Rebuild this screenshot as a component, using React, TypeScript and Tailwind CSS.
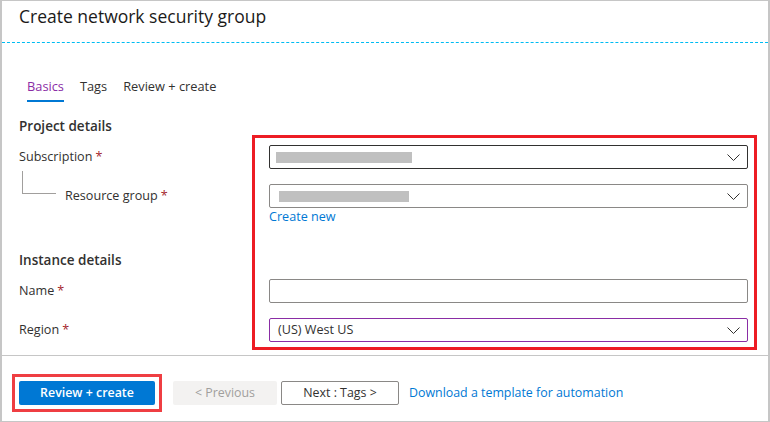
import React from 'react';

const FONT = { fontFamily: '"Open Sans", "Noto Sans", Arial, sans-serif' };

const Chevron = () => (
  <svg width="13" height="7" viewBox="0 0 13 7" className="shrink-0">
    <polyline points="0.5,0.5 6.5,6.5 12.5,0.5" fill="none" stroke="#323130" strokeWidth="1" />
  </svg>
);

const Req = () => <span className="text-[#a4262c] ml-[3px]">*</span>;

export default function App() {
  return (
    <div style={FONT} className="w-[770px] h-[422px] bg-white border-x-2 border-y border-[#c6c6c6] flex flex-col text-[#323130] overflow-hidden">
      {/* header */}
      <div className="h-[42px] border-b border-dashed border-[#00bcf2] px-[17px] pt-[3px]">
        <h1 className="text-[17.5px] leading-[24px] font-normal text-[#1b1a19]">Create network security group</h1>
      </div>

      <div className="pl-[17px]">
        {/* tabs */}
        <div className="mt-[34px] ml-[8px] flex gap-[16px] text-[12.8px] leading-[18px]">
          <div className="flex flex-col">
            <span className="text-[#8a2da5]">Basics</span>
            <span className="mt-[5px] h-[2px] bg-[#0078d4]" />
          </div>
          <span>Tags</span>
          <span>Review + create</span>
        </div>

        <div className="mt-[15px] text-[13.5px] leading-[18px] font-semibold">Project details</div>

        <div className="flex">
          {/* labels */}
          <div className="w-[233px] shrink-0 text-[12.6px] leading-[18px] flex flex-col">
            <div className="mt-[10px] h-[24px] flex items-center">Subscription<Req /></div>
            <div className="mt-[2px] flex items-start">
              <div className="ml-[3px] w-[34px] h-[23px] border-l border-b border-[#a19f9d]" />
              <div className="ml-[9px] mt-[16px] h-[18px]">Resource group<Req /></div>
            </div>
            <div className="mt-[46px] text-[13.5px] font-semibold">Instance details</div>
            <div className="mt-[13px]">Name<Req /></div>
            <div className="mt-[21px]">Region<Req /></div>
          </div>

          {/* fields */}
          <div className="w-[505px] shrink-0 border-[3px] border-[#ed1c24] pl-[14px] pr-[6px] pt-[7px] pb-[5px] flex flex-col">
            <div className="h-[24px] border border-[#323130] rounded-[2px] flex items-center pl-[6px] pr-[7px]">
              <div className="w-[136px] h-[11px] bg-[#c0c0c0]" />
              <div className="flex-1" />
              <Chevron />
            </div>
            <div className="mt-[15px] h-[24px] border border-[#8a8886] rounded-[2px] flex items-center pl-[9px] pr-[7px]">
              <div className="w-[130px] h-[11px] bg-[#c0c0c0]" />
              <div className="flex-1" />
              <Chevron />
            </div>
            <a className="text-[12.6px] leading-[18px] text-[#0078d4] self-start">Create new</a>
            <div className="mt-[53px] h-[24px] border border-[#8a8886] rounded-[2px]" />
            <div className="mt-[15px] h-[24px] border border-[#8a2da5] rounded-[2px] flex items-center pl-[8px] pr-[7px] text-[12.6px]">
              <span className="flex-1">(US) West US</span>
              <Chevron />
            </div>
          </div>
        </div>
      </div>

      <div className="mt-[5px] h-px bg-[#c6c6c6]" />

      {/* footer */}
      <div className="mt-[18px] px-[10px] flex items-center text-[12.4px]">
        <div className="border-[3px] border-[#ef3e42] p-[4px]">
          <button className="w-[136px] h-[24px] bg-[#0078d4] text-white font-semibold rounded-[2px] leading-[24px]">Review + create</button>
        </div>
        <button className="ml-[11px] w-[104px] h-[24px] bg-[#f3f2f1] text-[#a19f9d] rounded-[2px]">&lt; Previous</button>
        <button className="ml-[4px] w-[118px] h-[24px] border border-[#8a8886] rounded-[2px] bg-white">Next : Tags &gt;</button>
        <a className="ml-[10px] text-[#0078d4]">Download a template for automation</a>
      </div>
    </div>
  );
}
